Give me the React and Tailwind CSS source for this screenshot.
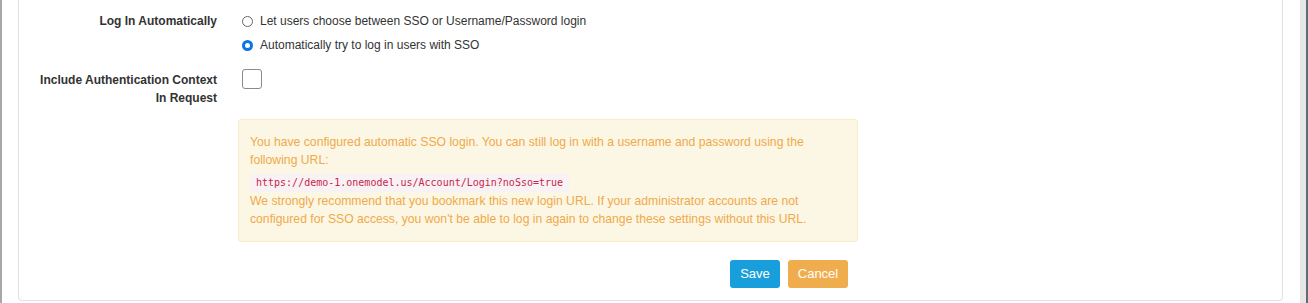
export default function App() {
  const font = { fontFamily: '"Liberation Sans", Arial, Helvetica, sans-serif' };
  return (
    <div className="flex h-[303px] w-[1308px] bg-white overflow-hidden" style={font}>
      <div className="w-[2px] h-full bg-[#a8a8a8]" />
      <div className="w-[16px]" />
      <div className="w-[1265px] h-[301px] border-x border-b border-[#e2e2e2] rounded-b-[4px] text-[12px] text-[#333]">
        <div className="flex pt-[12px]">
          <div className="w-[198px] text-right font-bold leading-[18px]">Log In Automatically</div>
          <div className="ml-[25px] flex flex-col gap-[6px]">
            <label className="flex items-center h-[18px] leading-[18px]">
              <span className="w-[11px] h-[11px] rounded-full border border-[#666] bg-white" />
              <span className="ml-[7px] text-[12px]">Let users choose between SSO or Username/Password login</span>
            </label>
            <label className="flex items-center h-[18px] leading-[18px]">
              <span className="w-[11px] h-[11px] rounded-full bg-[#0a75e8] flex items-center justify-center">
                <span className="w-[5px] h-[5px] rounded-full bg-white" />
              </span>
              <span className="ml-[7px] text-[12px]">Automatically try to log in users with SSO</span>
            </label>
          </div>
        </div>
        <div className="flex mt-[15px]">
          <div className="w-[198px] text-right font-bold leading-[18px] pt-[2px]">
            Include Authentication Context
            <br />
            In Request
          </div>
          <div className="ml-[25px]">
            <div className="w-[20px] h-[20px] rounded-[3px] border border-[#8a8a8a] bg-white" />
          </div>
        </div>
        <div className="ml-[219px] mt-[12px] w-[620px] bg-[#fcf7e4] border border-[#f8ecca] rounded-[3px] pl-[11px] pr-[40px] pt-[13px] pb-[13px] text-[12.2px] leading-[18px] text-[#f0a94a]">
          <div>
            You have configured automatic SSO login. You can still log in with a username and password using the
            following URL:
          </div>
          <div className="mt-[4px] mb-[1px] h-[18px]">
            <code
              className="inline-block px-[6px] bg-[#f9f2f4] text-[#c7254e] text-[10px] leading-[18px] rounded-[3px]"
              style={{ fontFamily: '"DejaVu Sans Mono", "Liberation Mono", monospace' }}
            >
              https://demo-1.onemodel.us/Account/Login?noSso=true
            </code>
          </div>
          <div>
            We strongly recommend that you bookmark this new login URL. If your administrator accounts are not
            configured for SSO access, you won't be able to log in again to change these settings without this URL.
          </div>
        </div>
        <div className="ml-[711px] mt-[18px] flex gap-[8px]">
          <button className="w-[50px] h-[28px] rounded-[3px] bg-[#189fdb] text-white text-[13px]">Save</button>
          <button className="w-[60px] h-[28px] rounded-[3px] bg-[#f0ad4e] text-white text-[13px]">Cancel</button>
        </div>
      </div>
      <div className="w-[17px]" />
      <div className="w-[6px] h-full bg-[#e6e6e6]" />
      <div className="w-[2px] h-full bg-[#5f6b78]" />
    </div>
  );
}
